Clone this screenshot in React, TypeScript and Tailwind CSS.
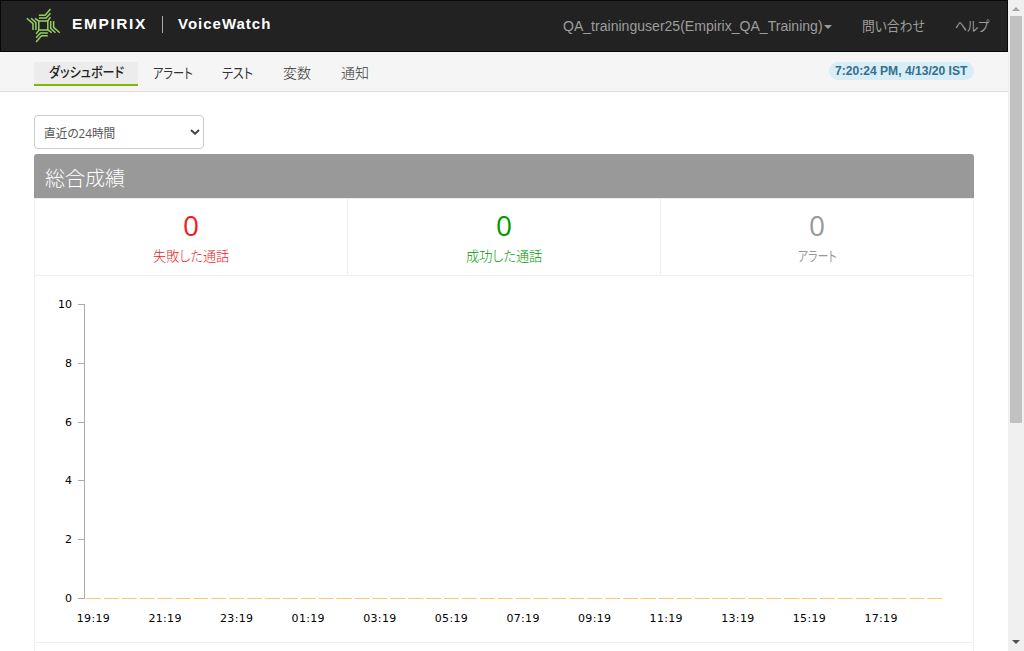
import React from "react";

const JP = "font-['Liberation_Sans','Noto_Sans_CJK_JP',sans-serif]";

function Fit({ width, size, weight = 400, children, family = "'Open Sans','Noto Sans CJK JP',sans-serif" }: {
  width: number; size: number; weight?: number; children: string; family?: string;
}) {
  const ref = React.useRef<HTMLSpanElement>(null);
  const [scale, setScale] = React.useState(1);
  React.useLayoutEffect(() => {
    if (ref.current) setScale(width / ref.current.offsetWidth);
  }, [width, size, children]);
  return (
    <span className="inline-flex justify-start whitespace-nowrap" style={{ width }}>
      <span
        ref={ref}
        className="inline-block shrink-0 origin-left"
        style={{ transform: `scaleX(${scale})`, fontSize: size, fontWeight: weight, fontFamily: family, fontFeatureSettings: '"palt"' }}
      >
        {children}
      </span>
    </span>
  );
}

function Logo() {
  const arm = "M-4.5 -10.3H1.8L7.2 -16.5M-4.5 -7.4H2.8L7.2 -12.2M4.3 -4.5L7.2 -8.4";
  return (
    <svg width="36" height="36" viewBox="-18.3 -17.5 36 36" fill="none" stroke="#98cf62" strokeWidth="1.5">
      <rect x="-4.5" y="-4.5" width="9" height="9" />
      {[0, 90, 180, 270].map((a) => (
        <path key={a} d={arm} transform={`rotate(${a})`} />
      ))}
    </svg>
  );
}

const tabs = [
  { label: "アラート", width: 40, weight: 400, box: "w-[69px]" },
  { label: "テスト", width: 31, weight: 400, box: "w-[61px]" },
  { label: "変数", width: 28, weight: 300, box: "w-[58px]" },
  { label: "通知", width: 28, weight: 300, box: "w-[58px]" },
];

const stats = [
  { label: "失敗した通話", width: 76, weight: 300, color: "text-[#ee1c1c]" },
  { label: "成功した通話", width: 76, weight: 300, color: "text-[#009900]" },
  { label: "アラート", width: 39, weight: 400, color: "text-[#999999]" },
];

const times = ["19:19", "21:19", "23:19", "01:19", "03:19", "05:19", "07:19", "09:19", "11:19", "13:19", "15:19", "17:19"];

function Chart() {
  return (
    <svg width="938" height="366" viewBox="35 276 938 366" className="block" fontFamily="'DejaVu Sans',sans-serif" fontSize="11">
      <path d="M84.5 304V599" stroke="#aaa" />
      {[10, 8, 6, 4, 2, 0].map((v, i) => {
        const y = Math.round(304 + i * 58.8);
        return (
          <g key={v}>
            <path d={`M78 ${y + 0.5}H84`} stroke="#aaa" />
            <text x="72" y={y + 4} textAnchor="end">{v}</text>
          </g>
        );
      })}
      {Array.from({ length: 48 }, (_, i) => (
        <path key={i} d={`M${86 + i * 17.9} 598.5h15`} stroke="#ffc477" />
      ))}
      {times.map((t, i) => (
        <text key={t} x={93.3 + i * 71.6} y="622" textAnchor="middle" textLength="33">{t}</text>
      ))}
    </svg>
  );
}

export default function App() {
  return (
    <div className={`flex h-[651px] w-[1024px] overflow-hidden bg-white ${JP}`}>
      <div className="flex w-[1008px] flex-col">
        <header className="flex h-[52px] shrink-0 items-center border border-[#080808] bg-[#222] pr-[18px] pl-[24px] text-[#9d9d9d]">
          <Logo />
          <div className="ml-[11px] flex items-center pb-[4px] text-[15px] leading-6 font-bold text-white">
            <span className="w-[75px] text-[15.5px] tracking-[1.6px]">EMPIRIX</span>
            <span className="mr-[15px] ml-[15px] h-[17px] w-px bg-[#aaa]" />
            <span className="w-[94px] tracking-[1px]">VoiceWatch</span>
          </div>
          <nav className="ml-auto flex items-center leading-5">
            <Fit width={260} size={14} family="'Liberation Sans'">QA_traininguser25(Empirix_QA_Training)</Fit>
            <svg width="8" height="4" className="mt-[2px] ml-px" fill="#9d9d9d"><path d="M0 0H8L4 4Z" /></svg>
            <span className="ml-[30px]"><Fit width={63} size={14}>問い合わせ</Fit></span>
            <span className="ml-[30px]"><Fit width={34} size={14}>ヘルプ</Fit></span>
          </nav>
        </header>
        <div className="flex h-[40px] shrink-0 items-start border-b border-[#ddd] bg-[#f5f5f5] pt-[10px] pr-[34px] pl-[34px] leading-5 text-[#333]">
          <div className="flex h-[24px] w-[104px] justify-center border-b-2 border-[#80ba00] bg-[#ececec] text-[#222]">
            <Fit width={75} size={14} weight={500}>ダッシュボード</Fit>
          </div>
          {tabs.map((t) => (
            <div key={t.label} className={`flex h-[24px] justify-center pt-px ${t.box}`}>
              <Fit width={t.width} size={14} weight={t.weight}>{t.label}</Fit>
            </div>
          ))}
          <div className="ml-auto flex h-[18px] w-[145px] items-center justify-center rounded-full bg-[#d9edf7] pr-px text-[#31708f]">
            <Fit width={132} size={12} weight={700} family="'Liberation Sans'">7:20:24 PM, 4/13/20 IST</Fit>
          </div>
        </div>
        <main className="flex flex-col px-[34px] pt-[23px]">
          <button className="flex h-[34px] w-[170px] items-center rounded-[4px] border border-[#ccc] pr-[3px] pl-[9px] text-[#555]">
            <span className="pt-[2px]"><Fit width={71} size={12}>直近の24時間</Fit></span>
            <svg width="10" height="6" className="ml-auto" fill="none" stroke="#444" strokeWidth="2"><path d="M1 1L5 4.7L9 1" /></svg>
          </button>
          <section className="mt-[5px] h-[520px] w-[940px]">
            <h2 className="flex h-[44px] items-center rounded-t-[3px] bg-[#999] pt-[6px] pl-[11px] text-white">
              <Fit width={80} size={20} weight={300}>総合成績</Fit>
            </h2>
            <div className="h-[476px] border border-[#eee]">
              <div className="grid h-[77px] grid-cols-[313px_313px_312px] border-b border-[#eee]">
                {stats.map((s, i) => (
                  <div key={s.label} className={`flex flex-col items-center ${i < 2 ? "border-r border-[#eee]" : ""} ${s.color}`}>
                    <span className="mt-[6px] h-[41px] font-['Open_Sans'] text-[28px] leading-[41px]">0</span>
                    <span className="h-5 leading-5"><Fit width={s.width} size={14} weight={s.weight}>{s.label}</Fit></span>
                  </div>
                ))}
              </div>
              <div className="border-b border-[#eee]"><Chart /></div>
            </div>
          </section>
        </main>
      </div>
      <aside className="flex w-4 flex-col items-center bg-[#f0f0f0]">
        <svg width="8" height="4" className="mt-[7px] shrink-0" fill="#a3a3a3"><path d="M0 4L4 0L8 4Z" /></svg>
        <div className="mt-[5px] h-[407px] w-3 bg-[#c1c1c1]" />
        <svg width="8" height="4" className="mt-auto mb-[7px]" fill="#505050"><path d="M0 0L4 4L8 0Z" /></svg>
      </aside>
    </div>
  );
}
